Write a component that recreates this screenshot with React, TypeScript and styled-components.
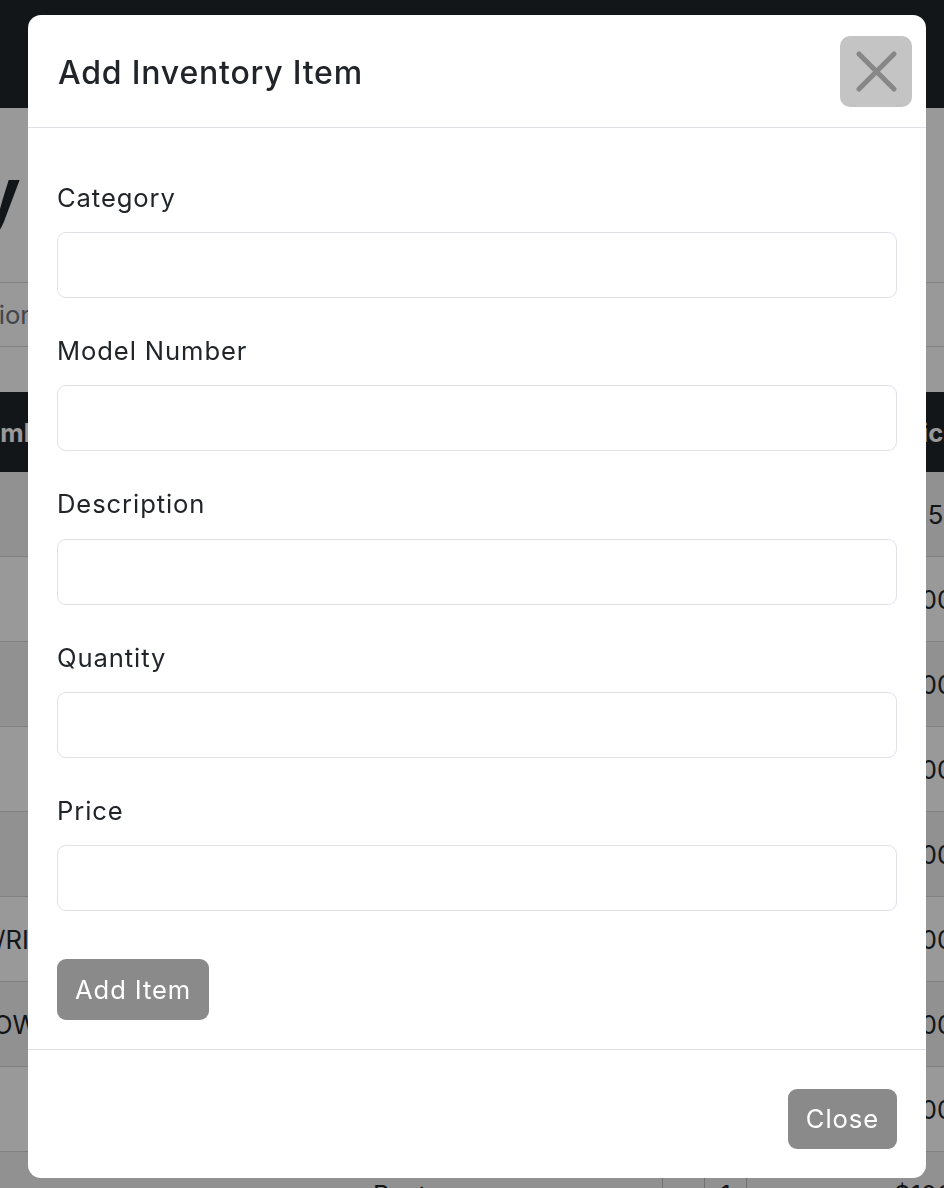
import React from 'react';
import styled, { createGlobalStyle } from 'styled-components';

const GlobalStyle = createGlobalStyle`
  * { box-sizing: border-box; }
  html, body { margin: 0; padding: 0; }
  body {
    width: 944px;
    height: 1188px;
    overflow: hidden;
    background: #ffffff;
    color: #212529;
    font-family: Inter, "Noto Sans", "Liberation Sans", sans-serif;
  }
`;

/* ---------- background page (under the backdrop) ---------- */

const Navbar = styled.header`
  height: 108px;
  background: #212529;
`;

const PageHeading = styled.h1`
  margin: 40px 0 0 -322px;
  font: 700 76px/91px "Liberation Sans", Arial, sans-serif;
  white-space: nowrap;
  color: #212529;
`;

const FilterRow = styled.div`
  margin: 43px 0 0 0;
  height: 65px;
  border-top: 1px solid #d6d8db;
  border-bottom: 1px solid #d6d8db;
  display: flex;
  align-items: center;
`;

const FilterText = styled.span`
  margin-left: -103px;
  font-size: 25.6px;
  color: #6c757d;
  white-space: nowrap;
`;

const DataTable = styled.table`
  margin: 45px 0 0 -137px;
  border-collapse: collapse;
  table-layout: fixed;
  width: 1207px;
  font-size: 25.6px;
`;

const HeadCell = styled.th<{ $w?: number }>`
  width: ${(p) => (p.$w ? `${p.$w}px` : 'auto')};
  height: 80px;
  padding: 0 18px;
  background: #212529;
  color: #ffffff;
  font-weight: 700;
  text-align: left;
  white-space: nowrap;
  overflow: hidden;
`;

const BodyRow = styled.tr`
  height: 84px;
  border-bottom: 1px solid #d6d8db;
  &:nth-child(odd) { background: #f2f2f2; }
`;

const Cell = styled.td`
  padding: 0 18px;
  white-space: nowrap;
  overflow: hidden;
  vertical-align: middle;
`;

const QtyCell = styled.td`
  padding: 0;
  vertical-align: middle;
`;

const QtyGroup = styled.div`
  display: flex;
  height: 84px;
`;

const QtyBox = styled.span<{ $w: number }>`
  width: ${(p) => p.$w}px;
  display: flex;
  align-items: center;
  justify-content: center;
  border-left: 1px solid #b9bcbf;
  font-size: 25.6px;
`;

/* ---------- modal ---------- */

const Backdrop = styled.div`
  position: fixed;
  inset: 0;
  background: rgba(0, 0, 0, 0.4);
`;

const ModalLayer = styled.div`
  position: fixed;
  inset: 0;
  padding: 15px 0 0 28px;
`;

const Dialog = styled.div`
  width: 898px;
  background: #ffffff;
  border-radius: 13px;
  display: flex;
  flex-direction: column;
  overflow: hidden;
`;

const Header = styled.div`
  height: 113px;
  display: flex;
  align-items: center;
  justify-content: space-between;
  padding: 0 14px 0 30px;
  border-bottom: 1px solid #dee2e6;
`;

const Title = styled.h5`
  margin: 4px 0 0;
  font-size: 32px;
  font-weight: 500;
  letter-spacing: 0.8px;
  line-height: 1.2;
  color: #212529;
`;

const CloseX = styled.button`
  width: 72px;
  height: 71px;
  padding: 0;
  border: 0;
  border-radius: 10px;
  background: #c4c4c4;
  display: flex;
  align-items: center;
  justify-content: center;
`;

const Body = styled.div`
  padding: 53px 29px 29px;
`;

const Group = styled.div`
  margin-bottom: 36px;
`;

const Label = styled.label`
  display: block;
  font-size: 25.6px;
  letter-spacing: 0.9px;
  line-height: 34px;
  margin-bottom: 17.2px;
  color: #212529;
`;

const Input = styled.input`
  display: block;
  width: 100%;
  height: 66px;
  border: 1px solid #dee2e6;
  border-radius: 9px;
  background: #ffffff;
  font-size: 25.6px;
  padding: 0 19px;
  outline: none;
`;

const GrayButton = styled.button<{ $top?: number }>`
  margin-top: ${(p) => p.$top ?? 0}px;
  height: ${(p) => (p.$top ? 61 : 60)}px;
  padding: 0 18px;
  border: 0;
  border-radius: 9px;
  background: #8a8a8b;
  color: #ffffff;
  font-family: inherit;
  font-size: 25.6px;
  letter-spacing: 0.9px;
  line-height: 1;
`;

const Footer = styled.div`
  border-top: 1px solid #dee2e6;
  padding: 39px 29px 29px;
  display: flex;
  justify-content: flex-end;
`;

const rows = [
  { model: 'A1045', desc: 'Standard', qty: '3', price: '$1,515.00' },
  { model: 'B2200', desc: 'Standard', qty: '2', price: '$100.00' },
  { model: 'C310', desc: 'Deluxe', qty: '4', price: '$100.00' },
  { model: 'D4100', desc: 'Standard', qty: '1', price: '$100.00' },
  { model: 'E512', desc: 'Basic', qty: '6', price: '$100.00' },
  { model: 'KTX2000/RIC', desc: 'Premium', qty: '2', price: '$100.00' },
  { model: 'MXSHADOW', desc: 'Premium', qty: '1', price: '$100.00' },
  { model: 'F600', desc: 'Standard', qty: '5', price: '$100.00' },
  { model: 'G700', desc: 'Best', qty: '1', price: '$100.00' },
];

const fields = ['Category', 'Model Number', 'Description', 'Quantity', 'Price'];

export default function App() {
  return (
    <>
      <GlobalStyle />
      <Navbar />
      <PageHeading>Inventory</PageHeading>
      <FilterRow>
        <FilterText>Description</FilterText>
      </FilterRow>
      <DataTable>
        <thead>
          <tr>
            <HeadCell $w={492}>Model Number</HeadCell>
            <HeadCell $w={307}>Description</HeadCell>
            <HeadCell $w={132}>Quantity</HeadCell>
            <HeadCell $w={82}></HeadCell>
            <HeadCell>Price</HeadCell>
          </tr>
        </thead>
        <tbody>
          {rows.map((r) => (
            <BodyRow key={r.model}>
              <Cell>{r.model}</Cell>
              <Cell>{r.desc}</Cell>
              <QtyCell>
                <QtyGroup>
                  <QtyBox $w={42}>-</QtyBox>
                  <QtyBox $w={42}>{r.qty}</QtyBox>
                  <QtyBox $w={48}>+</QtyBox>
                </QtyGroup>
              </QtyCell>
              <Cell></Cell>
              <Cell>{r.price}</Cell>
            </BodyRow>
          ))}
        </tbody>
      </DataTable>

      <Backdrop />
      <ModalLayer>
        <Dialog role="dialog" aria-modal="true">
          <Header>
            <Title>Add Inventory Item</Title>
            <CloseX aria-label="Close">
              <svg width="41" height="41" viewBox="0 0 41 41">
                <line x1="3" y1="3" x2="38" y2="38" stroke="#878787" strokeWidth="5" strokeLinecap="round" />
                <line x1="38" y1="3" x2="3" y2="38" stroke="#878787" strokeWidth="5" strokeLinecap="round" />
              </svg>
            </CloseX>
          </Header>
          <Body>
            {fields.map((f) => (
              <Group key={f}>
                <Label>{f}</Label>
                <Input type="text" />
              </Group>
            ))}
            <GrayButton $top={12}>Add Item</GrayButton>
          </Body>
          <Footer>
            <GrayButton>Close</GrayButton>
          </Footer>
        </Dialog>
      </ModalLayer>
    </>
  );
}
